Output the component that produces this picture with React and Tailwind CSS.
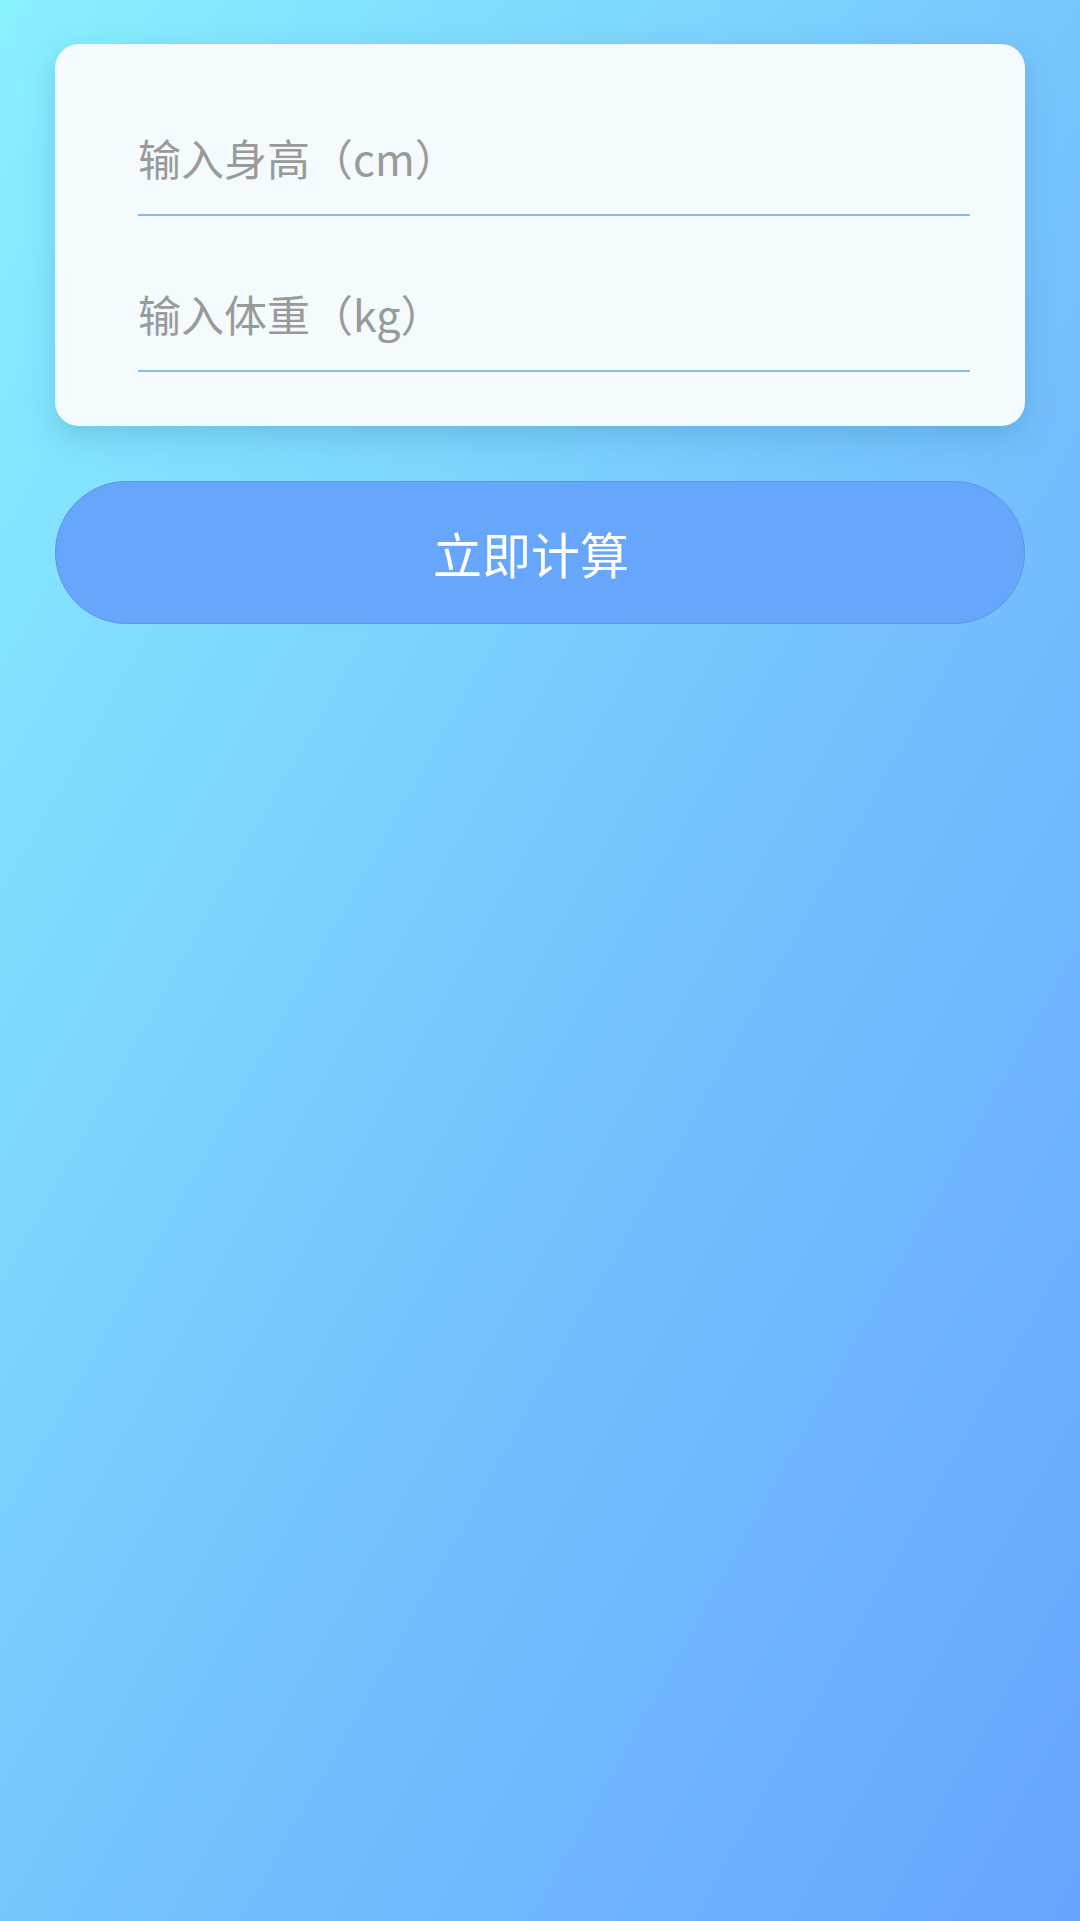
import React, { useState } from 'react';

export default function App() {
  const [form, setForm] = useState({ height: '', weight: '' });

  const handleChange = (e) => {
    const { name, value } = e.target;
    setForm((prev) => ({ ...prev, [name]: value }));
  };

  return (
    <div
      className="min-h-[1921px] w-full bg-gradient-to-br from-[#8af1fe] via-[#77c6fd] to-[#66a5fd] px-[55px] pt-[44px]"
      style={{ fontFamily: '"Noto Sans CJK SC", "Noto Sans", sans-serif' }}
    >
      {/* Card */}
      <div className="rounded-[24px] bg-[#f3fbff] pl-[83px] pr-[55px] pt-[60px] pb-[54px] shadow-[0_10px_30px_rgba(40,110,160,0.25)]">
        <div className="flex flex-col gap-[44px]">
          <input
            name="height"
            value={form.height}
            onChange={handleChange}
            placeholder="输入身高（cm）"
            className="h-[112px] w-full border-b-2 border-[#8bbbe0] bg-transparent pb-[4px] text-[43px] text-[#444] placeholder-[#9a9a9a] outline-none"
          />
          <input
            name="weight"
            value={form.weight}
            onChange={handleChange}
            placeholder="输入体重（kg）"
            className="h-[112px] w-full border-b-2 border-[#8bbbe0] bg-transparent pb-[4px] text-[43px] text-[#444] placeholder-[#9a9a9a] outline-none"
          />
        </div>
      </div>

      {/* Submit */}
      <button className="mt-[55px] flex h-[143px] w-full items-center justify-center rounded-full border border-[#5a97e4] bg-[#66a6fd] pr-[18px] text-[49px] text-white">
        立即计算
      </button>
    </div>
  );
}
